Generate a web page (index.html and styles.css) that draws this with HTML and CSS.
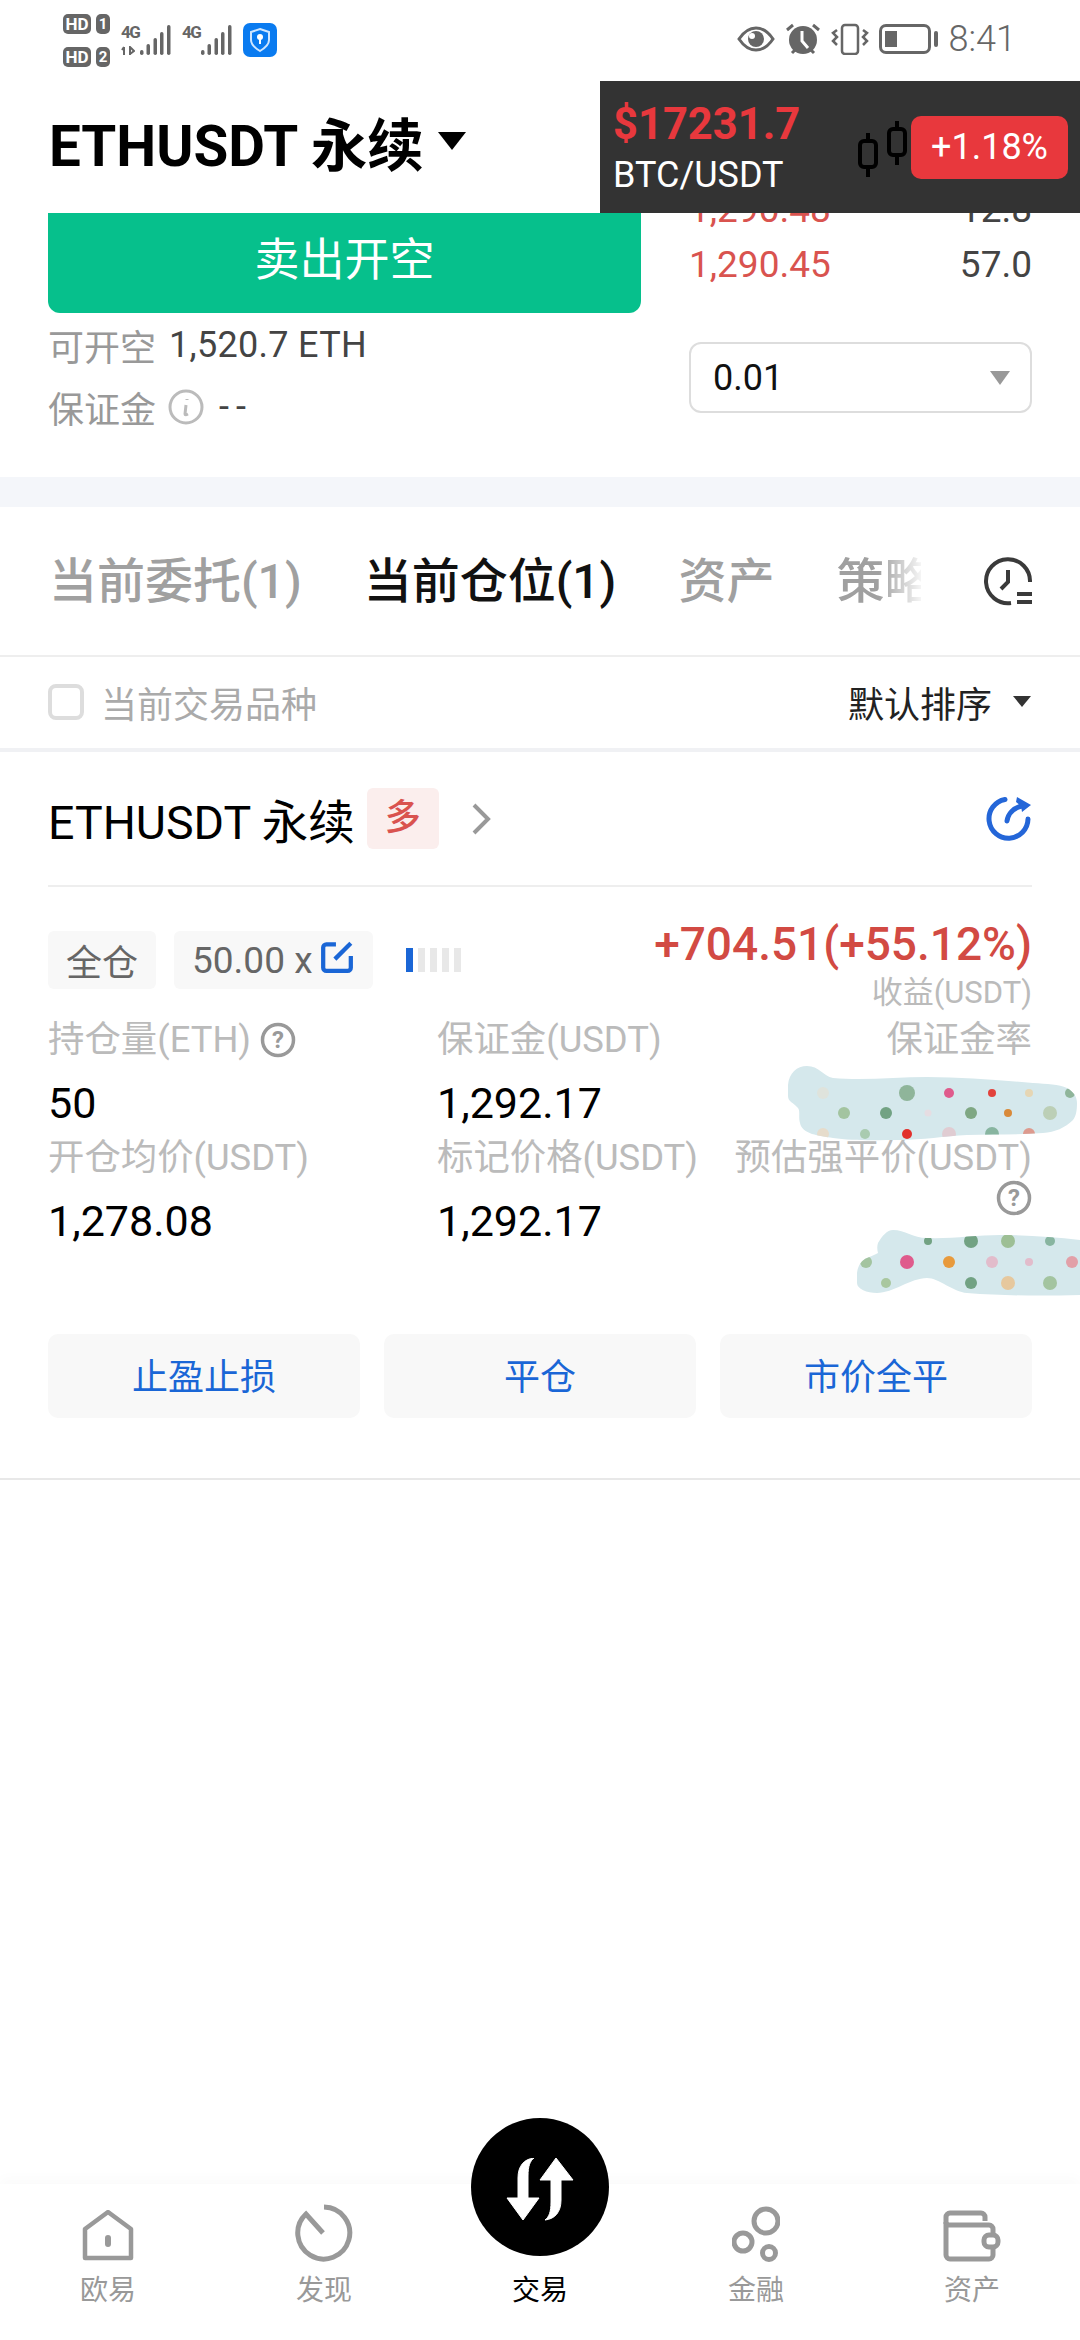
FILE: index.html
```html
<!DOCTYPE html>
<html lang="en">
  <head>
    <meta charset="UTF-8" />
    <meta name="viewport" content="width=device-width, initial-scale=1.0" />
    <title>ETHUSDT</title>
    <link rel="stylesheet" href="styles.css">
  </head>
  <body>
    <div class="page">
      <div class="status">
        <div class="status-left">
          <div class="sims">
            <div class="sim"><span class="hd">HD</span><span class="num">1</span></div>
            <div class="sim"><span class="hd">HD</span><span class="num">2</span></div>
          </div>
          <div class="signal">
            <div class="net"><span>4G</span>
              <svg width="14" height="10" viewBox="0 0 14 10"><path d="M3 1v8M1 4l2-3M9 9V1l4 4-4 3" fill="none" stroke="#666" stroke-width="2"/></svg>
            </div>
            <svg width="32" height="31" viewBox="0 0 32 31"><g fill="#666"><rect x="0" y="25" width="3.5" height="5" rx="1.7"/><rect x="6.5" y="19" width="3.5" height="11" rx="1.7"/><rect x="13.5" y="13" width="3.5" height="17" rx="1.7"/><rect x="20" y="7" width="3.5" height="23" rx="1.7"/><rect x="27" y="0" width="3.5" height="30" rx="1.7"/></g></svg>
          </div>
          <div class="signal sig2">
            <div class="net"><span>4G</span></div>
            <svg width="32" height="31" viewBox="0 0 32 31"><g fill="#666"><rect x="0" y="25" width="3.5" height="5" rx="1.7"/><rect x="6.5" y="19" width="3.5" height="11" rx="1.7"/><rect x="13.5" y="13" width="3.5" height="17" rx="1.7"/><rect x="20" y="7" width="3.5" height="23" rx="1.7"/><rect x="27" y="0" width="3.5" height="30" rx="1.7"/></g></svg>
          </div>
          <div class="shield">
            <svg width="24" height="26" viewBox="0 0 24 26"><path d="M12 2l9 3v8c0 5-4 8-9 11-5-3-9-6-9-11V5z" fill="none" stroke="#cfe6ff" stroke-width="2"/><circle cx="12" cy="10" r="3" fill="#fff"/><rect x="11" y="11" width="2" height="6" fill="#fff"/></svg>
          </div>
        </div>
        <div class="status-right">
          <svg width="38" height="26" viewBox="0 0 38 26"><path d="M2 13C8 4 14 2 19 2s11 2 17 11c-6 9-12 11-17 11S8 22 2 13z" fill="none" stroke="#666" stroke-width="3"/><circle cx="19" cy="13" r="8" fill="#666"/><circle cx="15" cy="10" r="3" fill="#fff"/></svg>
          <svg width="36" height="32" viewBox="0 0 36 32"><circle cx="18" cy="17" r="14" fill="#666"/><path d="M17 8v10l6 7" fill="none" stroke="#fff" stroke-width="3"/><path d="M2 7l6-5M34 7l-6-5M7 30l3-3M29 30l-3-3" stroke="#666" stroke-width="3"/></svg>
          <svg width="38" height="32" viewBox="0 0 38 32"><rect x="11" y="2" width="16" height="29" rx="3" fill="none" stroke="#666" stroke-width="2.5"/><path d="M6 7l-4 3 4 4-4 4 4 4M32 7l4 3-4 4 4 4-4 4" fill="none" stroke="#666" stroke-width="2.5"/></svg>
          <div class="battery"><div class="battery-body"><div class="battery-fill"></div></div><div class="battery-nub"></div></div>
          <span class="clock">8:41</span>
        </div>
      </div>

      <div class="header">
        <span class="title">ETHUSDT 永续</span>
        <span class="title-caret"></span>
      </div>

      <div class="trade">
        <div class="trade-left">
          <div class="sell-btn">卖出开空</div>
          <div class="info-row"><span class="info-label">可开空</span><span class="info-value">1,520.7 ETH</span></div>
          <div class="info-row margin-row">
            <span class="info-label">保证金</span>
            <svg width="36" height="36" viewBox="0 0 36 36"><circle cx="18" cy="18" r="16" fill="none" stroke="#bbb" stroke-width="3"/><path d="M19 10v1M18 16l-1 9c0 1 1 1 3 0" fill="none" stroke="#bbb" stroke-width="3"/></svg>
            <span class="info-value dash">--</span>
          </div>
        </div>
        <div class="trade-right">
          <div class="book">
            <div class="book-row"><span class="ask">1,290.48</span><span>12.8</span></div>
            <div class="book-row"><span class="ask">1,290.45</span><span>57.0</span></div>
          </div>
          <div class="select"><span>0.01</span><span class="select-caret"></span></div>
        </div>
      </div>

      <div class="strip"></div>

      <div class="tabs">
        <span class="tab">当前委托(1)</span>
        <span class="tab active">当前仓位(1)</span>
        <span class="tab">资产</span>
        <span class="tab fade">策略</span>
        <svg class="history" width="50" height="50" viewBox="0 0 50 50"><path d="M28 47A22 22 0 1 1 47 26" fill="none" stroke="#3a3a3a" stroke-width="4"/><path d="M25 14v12l-7 7" fill="none" stroke="#3a3a3a" stroke-width="4"/><path d="M34 38h15M34 46h15" stroke="#3a3a3a" stroke-width="4"/></svg>
      </div>

      <div class="filter">
        <span class="check"></span>
        <span class="filter-label">当前交易品种</span>
        <span class="sort">默认排序</span>
        <span class="sort-caret"></span>
      </div>

      <div class="position">
        <div class="pos-head">
          <span class="pos-name">ETHUSDT 永续</span>
          <span class="long-tag">多</span>
          <svg width="20" height="34" viewBox="0 0 20 34"><path d="M3 3l14 14L3 31" fill="none" stroke="#999" stroke-width="4"/></svg>
          <svg class="refresh" width="46" height="46" viewBox="0 0 46 46"><path d="M19 3.5A19.5 19.5 0 1 0 42 23" fill="none" stroke="#2466d8" stroke-width="5" stroke-linecap="round"/><path d="M21 25c1-7 6-13 15-15" fill="none" stroke="#2466d8" stroke-width="5" stroke-linecap="round"/><path d="M31 1l14 8-9 7-1-6-5-4z" fill="#2466d8"/></svg>
        </div>

        <div class="pos-summary">
          <span class="chip">全仓</span>
          <span class="chip lever">50.00 x
            <svg width="34" height="34" viewBox="0 0 32 32"><path d="M15 4H6a3 3 0 0 0-3 3v19a3 3 0 0 0 3 3h20a3 3 0 0 0 3-3V15" fill="none" stroke="#1a66d6" stroke-width="4"/><path d="M14 18L29 3" stroke="#1a66d6" stroke-width="4"/></svg>
          </span>
          <div class="adl"><i class="on"></i><i></i><i></i><i></i><i></i></div>
          <div class="pnl">+704.51(+55.12%)</div>
        </div>
        <div class="pnl-label">收益(USDT)</div>

        <div class="stats">
          <div class="stat">
            <div class="stat-label">持仓量(ETH)
              <svg class="help" width="36" height="36" viewBox="0 0 36 36"><circle cx="18" cy="18" r="15.5" fill="none" stroke="#999" stroke-width="3.5"/><text x="18" y="26" text-anchor="middle" class="help-mark">?</text></svg>
            </div>
            <div class="stat-value">50</div>
          </div>
          <div class="stat">
            <div class="stat-label">保证金(USDT)</div>
            <div class="stat-value">1,292.17</div>
          </div>
          <div class="stat right">
            <div class="stat-label">保证金率</div>
            <div class="stat-value"></div>
          </div>
          <div class="stat">
            <div class="stat-label">开仓均价(USDT)</div>
            <div class="stat-value">1,278.08</div>
          </div>
          <div class="stat">
            <div class="stat-label">标记价格(USDT)</div>
            <div class="stat-value">1,292.17</div>
          </div>
          <div class="stat right">
            <div class="stat-label nowrap">预估强平价(USDT)</div>
            <svg class="help help-low" width="36" height="36" viewBox="0 0 36 36"><circle cx="18" cy="18" r="15.5" fill="none" stroke="#999" stroke-width="3.5"/><text x="18" y="26" text-anchor="middle" class="help-mark">?</text></svg>
          </div>
        </div>

        <div class="actions">
          <span class="action">止盈止损</span>
          <span class="action">平仓</span>
          <span class="action">市价全平</span>
        </div>
      </div>

      <!-- scribbles hiding the private numbers -->
      <svg class="scribble scribble-one" width="292" height="76" viewBox="0 0 292 76">
        <defs>
          <clipPath id="blobOne"><path d="M0 19C1 7 9 0 19 0c12 0 16 10 26 12 30 3 64-1 94-1 36 0 72 3 106 6 14 1 26 1 34 5 7 4 10 9 10 15 0 8-1 13-4 17-8 8-18 12-30 13-26 2-50 1-76 2-22 1-45 5-67 5-22 0-48 1-67-2-14-2-31-4-33-15-2-7 1-13-3-16C6 37 0 36 0 30z"/></clipPath>
        </defs>
        <g clip-path="url(#blobOne)">
          <rect width="292" height="76" fill="#d5e8ec"/>
          <circle cx="35" cy="27" r="6" fill="#dfe3dc"/><circle cx="119" cy="27" r="8" fill="#8fb59a"/><circle cx="161" cy="27" r="5" fill="#df5b8c"/><circle cx="204" cy="27" r="4" fill="#e2423c"/><circle cx="241" cy="27" r="4" fill="#e6d6b4"/><circle cx="282" cy="27" r="5" fill="#8fb59a"/>
          <circle cx="56" cy="47" r="6" fill="#a3c4a0"/><circle cx="98" cy="47" r="6" fill="#72a283"/><circle cx="140" cy="47" r="3.5" fill="#e6dde2"/><circle cx="183" cy="47" r="6" fill="#7fa783"/><circle cx="220" cy="47" r="4" fill="#d98a3a"/><circle cx="262" cy="47" r="7" fill="#bccfb6"/>
          <circle cx="35" cy="68" r="6" fill="#e6dccb"/><circle cx="77" cy="68" r="5" fill="#a9cbb0"/><circle cx="119" cy="68" r="5" fill="#e2302c"/><circle cx="161" cy="68" r="7" fill="#e0ccd2"/><circle cx="204" cy="68" r="7" fill="#88b5a0"/><circle cx="241" cy="68" r="6" fill="#dd9a8e"/>
        </g>
      </svg>
      <svg class="scribble scribble-two" width="223" height="66" viewBox="0 0 223 66">
        <defs>
          <clipPath id="blobTwo"><path d="M0 43c1-8 5-13 10-15 4-2 8-3 11-5-1-4-1-7 0-10 4-7 9-13 15-13 12 0 20 8 34 8 24 1 50-3 73-3 28 0 54 2 80 5v55c-36 1-74 1-113-2-14-1-28-15-40-15-16 0-34 15-50 15-10 0-20-4-20-10z"/></clipPath>
        </defs>
        <g clip-path="url(#blobTwo)">
          <rect width="223" height="66" fill="#d5e8ec"/>
          <circle cx="71" cy="11" r="4" fill="#72a283"/><circle cx="114" cy="11" r="7" fill="#72a283"/><circle cx="151" cy="11" r="7" fill="#9dbf95"/><circle cx="193" cy="11" r="5" fill="#88b5a0"/>
          <circle cx="9" cy="32" r="6" fill="#a3c4a0"/><circle cx="50" cy="32" r="7" fill="#df5b8c"/><circle cx="92" cy="32" r="6" fill="#e89a3c"/><circle cx="135" cy="32" r="6" fill="#e2bccb"/><circle cx="172" cy="32" r="4" fill="#e2bccb"/><circle cx="215" cy="32" r="6" fill="#e2a0a8"/>
          <circle cx="29" cy="53" r="5" fill="#a9c79f"/><circle cx="114" cy="53" r="6" fill="#72a283"/><circle cx="151" cy="53" r="7" fill="#e6c89e"/><circle cx="193" cy="53" r="7" fill="#a3c4a0"/>
        </g>
      </svg>

      <!-- floating ticker -->
      <div class="ticker">
        <div class="ticker-text">
          <div class="ticker-price">$17231.7</div>
          <div class="ticker-pair">BTC/USDT</div>
        </div>
        <svg class="candles" width="52" height="56" viewBox="0 0 52 56"><path d="M11 12v44M40 0v44" stroke="#000" stroke-width="4"/><rect x="3" y="20" width="16" height="26" rx="4" fill="#333" stroke="#000" stroke-width="4"/><rect x="32" y="8" width="16" height="26" rx="4" fill="#333" stroke="#000" stroke-width="4"/></svg>
        <div class="ticker-change">+1.18%</div>
      </div>

      <div class="tabbar">
        <div class="nav-item">
          <svg width="52" height="52" viewBox="0 0 52 52"><path d="M3 48V19L26 2l23 17v29z" fill="none" stroke="#999" stroke-width="4.5" stroke-linejoin="round"/><rect x="23" y="25" width="6" height="12" rx="3" fill="#999"/></svg>
          <span>欧易</span>
        </div>
        <div class="nav-item">
          <svg width="58" height="58" viewBox="0 0 58 58"><path d="M29 3a26 26 0 1 1-18 7l17 19" fill="none" stroke="#999" stroke-width="5"/></svg>
          <span>发现</span>
        </div>
        <div class="nav-item current">
          <div class="trade-circle">
            <svg class="swap" width="68" height="63" viewBox="0 0 68 63"><path d="M28 0C18 1 12 8 12 20v20H1l16 22 16-22H22V18C22 8 24 3 28 0z" fill="#fff" stroke="#fff" stroke-linejoin="round"/><path d="M39 62c10-1 16-8 16-20V22h12L50 0 34 22h11v22c0 10-2 15-6 18z" fill="#fff" stroke="#fff" stroke-linejoin="round"/></svg>
          </div>
          <span>交易</span>
        </div>
        <div class="nav-item">
          <svg width="48" height="56" viewBox="0 0 48 56"><circle cx="34" cy="15" r="12" fill="none" stroke="#999" stroke-width="5"/><circle cx="11" cy="36" r="9" fill="none" stroke="#999" stroke-width="5"/><circle cx="37" cy="47" r="6.5" fill="none" stroke="#999" stroke-width="5"/></svg>
          <span>金融</span>
        </div>
        <div class="nav-item">
          <svg width="58" height="52" viewBox="0 0 58 52"><path d="M3 14V7a4 4 0 0 1 4-4h31a4 4 0 0 1 4 4v4" fill="none" stroke="#999" stroke-width="5"/><path d="M3 12a3 3 0 0 0 3 3h40a4 4 0 0 1 4 4v26a4 4 0 0 1-4 4H7a4 4 0 0 1-4-4z" fill="none" stroke="#999" stroke-width="5"/><rect x="41" y="25" width="14" height="12" rx="5" fill="#fff" stroke="#999" stroke-width="5"/></svg>
          <span>资产</span>
        </div>
      </div>
    </div>
  </body>
</html>
```

FILE: styles.css
```css
* {
  box-sizing: border-box;
}
body {
  margin: 0;
  background: #fff;
  font-family: Roboto, "Noto Sans CJK SC", sans-serif;
}
.page {
  position: relative;
  width: 1080px;
  height: 2340px;
  overflow: hidden;
  background: #fff;
  display: flex;
  flex-direction: column;
}

/* status bar */
.status {
  height: 81px;
  flex-shrink: 0;
  display: flex;
  justify-content: space-between;
  padding: 14px 64px 0 63px;
}
.status-left {
  display: flex;
  align-items: flex-start;
}
.sims {
  display: flex;
  flex-direction: column;
  gap: 13px;
}
.sim {
  display: flex;
  gap: 5px;
}
.hd,
.num {
  height: 20px;
  background: #666;
  color: #fff;
  border-radius: 5px;
  font-size: 17px;
  font-weight: 700;
  line-height: 20px;
  text-align: center;
}
.hd {
  width: 28px;
}
.num {
  width: 14px;
  font-size: 15px;
}
.signal {
  display: flex;
  margin: 11px 0 0 11px;
}
.sig2 {
  margin-left: 10px;
}
.net {
  width: 19px;
  display: flex;
  flex-direction: column;
  gap: 6px;
  font-size: 17px;
  font-weight: 700;
  color: #666;
  line-height: 15px;
  letter-spacing: -1.5px;
}
.shield {
  width: 34px;
  height: 34px;
  margin: 9px 0 0 10px;
  background: #0a7bf0;
  border-radius: 7px;
  display: flex;
  align-items: center;
  justify-content: center;
}
.status-right {
  display: flex;
  align-items: center;
  gap: 10px;
  height: 52px;
  margin-top: -1px;
}
.battery {
  display: flex;
  align-items: center;
  gap: 3px;
}
.battery-body {
  width: 52px;
  height: 30px;
  border: 3px solid #666;
  border-radius: 7px;
  padding: 4px 3px;
}
.battery-fill {
  width: 12px;
  height: 100%;
  background: #666;
}
.battery-nub {
  width: 4px;
  height: 16px;
  background: #666;
  border-radius: 2px;
}
.clock {
  font-size: 36px;
  font-weight: 300;
  color: #666;
  margin-left: 1px;
}

/* header */
.header {
  height: 132px;
  flex-shrink: 0;
  padding: 0 0 13px 49px;
  display: flex;
  align-items: center;
  gap: 14px;
}
.title {
  font-size: 56.5px;
  font-weight: 700;
  color: #000;
}
.title-caret {
  width: 0;
  height: 0;
  border-left: 14px solid transparent;
  border-right: 14px solid transparent;
  border-top: 18px solid #000;
}

/* order area, top of the book runs under the header */
.trade {
  height: 264px;
  flex-shrink: 0;
  overflow: hidden;
  padding: 0 48px;
  display: grid;
  grid-template-columns: 593px 343px;
  column-gap: 48px;
}
.sell-btn {
  height: 100px;
  background: #06c08c;
  color: #fff;
  border-radius: 0 0 12px 12px;
  font-size: 45px;
  line-height: 96px;
  text-align: center;
}
.info-row {
  display: flex;
  align-items: center;
  gap: 13px;
  margin-top: 10px;
  height: 44px;
  font-size: 36px;
}
.margin-row {
  margin-top: 18px;
  gap: 12px;
}
.info-label {
  color: #999;
}
.info-value {
  color: #444;
  white-space: nowrap;
  letter-spacing: 0.3px;
}
.dash {
  letter-spacing: 7px;
  margin-left: 3px;
}
.book {
  margin-top: -31px;
}
.book-row {
  height: 55px;
  display: flex;
  justify-content: space-between;
  align-items: center;
  font-size: 37px;
  color: #444;
}
.ask {
  color: #d9534f;
}
.select {
  height: 71px;
  margin-top: 50px;
  border: 2px solid #ddd;
  border-radius: 12px;
  padding: 0 20px 0 22px;
  display: flex;
  justify-content: space-between;
  align-items: center;
  font-size: 36px;
  color: #111;
}
.select-caret {
  width: 0;
  height: 0;
  border-left: 10px solid transparent;
  border-right: 10px solid transparent;
  border-top: 14px solid #999;
}

.strip {
  height: 30px;
  flex-shrink: 0;
  background: #f4f6fa;
}

/* tabs */
.tabs {
  height: 150px;
  flex-shrink: 0;
  padding: 0 47px 8px 49px;
  display: flex;
  align-items: center;
  gap: 62px;
  border-bottom: 2px solid #eee;
  font-size: 48px;
  font-weight: 500;
  color: #a0a0a0;
}
.tab {
  white-space: nowrap;
  flex-shrink: 0;
}
.active {
  color: #111;
}
.fade {
  width: 85px;
  overflow: hidden;
  -webkit-mask-image: linear-gradient(to right, #000 50%, rgba(0, 0, 0, 0.1) 100%);
  mask-image: linear-gradient(to right, #000 50%, rgba(0, 0, 0, 0.1) 100%);
}
.history {
  margin: 8px 0 0 auto;
  flex-shrink: 0;
}

/* filter row */
.filter {
  height: 95px;
  flex-shrink: 0;
  padding: 0 49px 2px 48px;
  display: flex;
  align-items: center;
  border-bottom: 4px solid #f0f1f4;
}
.check {
  width: 36px;
  height: 36px;
  border: 4px solid #ddd;
  border-radius: 8px;
}
.filter-label {
  margin-left: 17px;
  font-size: 36px;
  color: #aaa;
}
.sort {
  margin-left: auto;
  font-size: 36px;
  color: #222;
}
.sort-caret {
  margin-left: 21px;
  width: 0;
  height: 0;
  border-left: 9px solid transparent;
  border-right: 9px solid transparent;
  border-top: 11px solid #333;
}

/* position card */
.position {
  height: 728px;
  flex-shrink: 0;
  padding: 0 48px;
  border-bottom: 2px solid #e8e8e8;
}
.pos-head {
  height: 135px;
  display: flex;
  align-items: center;
  border-bottom: 2px solid #eee;
}
.pos-name {
  font-size: 46.5px;
  color: #000;
}
.long-tag {
  margin: 0 32px 0 12px;
  width: 72px;
  height: 61px;
  background: #fbeeed;
  border-radius: 6px;
  color: #d9534f;
  font-size: 36px;
  font-weight: 500;
  line-height: 61px;
  text-align: center;
}
.refresh {
  margin-left: auto;
}
.pos-summary {
  display: flex;
  align-items: center;
  margin-top: 44px;
  height: 58px;
}
.chip {
  height: 58px;
  padding: 0 18px;
  background: #f8f8f8;
  border-radius: 6px;
  font-size: 36px;
  color: #666;
  display: flex;
  align-items: center;
  gap: 8px;
  white-space: nowrap;
}
.lever {
  margin-left: 18px;
  padding-right: 19px;
  font-size: 37px;
}
.lever svg {
  margin-top: -6px;
}
.adl {
  display: flex;
  gap: 5px;
  margin-left: 33px;
}
.adl i {
  width: 7px;
  height: 24px;
  background: #e8e8e8;
}
.adl .on {
  background: #1a66d6;
}
.pnl {
  margin-left: auto;
  font-size: 46px;
  font-weight: 500;
  color: #d24a43;
  white-space: nowrap;
  margin-top: -33px;
}
.pnl-label {
  text-align: right;
  font-size: 31px;
  color: #bbb;
  margin-top: -16px;
  height: 40px;
  line-height: 40px;
}
.stats {
  display: grid;
  grid-template-columns: 389px 1fr 1fr;
  grid-auto-rows: 118px;
  margin-top: 2px;
}
.stat-label {
  height: 50px;
  line-height: 50px;
  font-size: 36.4px;
  color: #bbb;
  display: flex;
  align-items: center;
  gap: 9px;
}
.stat-value {
  margin-top: 13px;
  font-size: 43px;
  line-height: 50px;
  color: #000;
}
.right {
  display: flex;
  flex-direction: column;
  align-items: flex-end;
}
.nowrap {
  white-space: nowrap;
}
.help-low {
  margin-top: -3px;
}
.help-mark {
  font-size: 24px;
  font-weight: 700;
  fill: #999;
}
.actions {
  margin-top: 83px;
  display: flex;
  gap: 24px;
}
.action {
  flex: 1;
  height: 84px;
  background: #f8f8f8;
  border-radius: 10px;
  color: #1a66d6;
  font-size: 36px;
  line-height: 88px;
  text-align: center;
}

/* pieces that sit over the page */
.scribble {
  position: absolute;
}
.scribble-one {
  left: 788px;
  top: 1066px;
}
.scribble-two {
  left: 857px;
  top: 1230px;
}
.ticker {
  position: absolute;
  left: 600px;
  top: 81px;
  width: 480px;
  height: 132px;
  background: #333;
  padding: 0 12px 0 13px;
  display: flex;
  align-items: center;
}
.ticker-text {
  margin-top: 1px;
}
.ticker-price {
  font-size: 43.5px;
  font-weight: 700;
  color: #e8383d;
  line-height: 52px;
}
.ticker-pair {
  font-size: 36px;
  color: #fff;
  line-height: 44px;
  margin-top: 2px;
}
.candles {
  margin-left: auto;
  margin-right: 2px;
  margin-top: 4px;
}
.ticker-change {
  width: 157px;
  height: 63px;
  background: #e8383d;
  border-radius: 10px;
  color: #fff;
  font-size: 36px;
  line-height: 63px;
  text-align: center;
}

/* bottom nav */
.tabbar {
  position: absolute;
  left: 0;
  bottom: 0;
  width: 1080px;
  height: 156px;
  background: #fff;
  box-shadow: 0 -6px 12px rgba(0, 0, 0, 0.02);
  display: grid;
  grid-template-columns: repeat(5, 1fr);
}
.nav-item {
  position: relative;
  display: flex;
  flex-direction: column;
  align-items: center;
  justify-content: flex-end;
  gap: 6px;
  padding-bottom: 32px;
  font-size: 28px;
  color: #999;
}
.current {
  color: #000;
}
.trade-circle {
  position: absolute;
  left: 50%;
  top: -66px;
  width: 138px;
  height: 138px;
  margin-left: -69px;
  border-radius: 50%;
  background: #000;
  display: flex;
  align-items: center;
  justify-content: center;
}
.swap {
  margin-top: 4px;
}
```
